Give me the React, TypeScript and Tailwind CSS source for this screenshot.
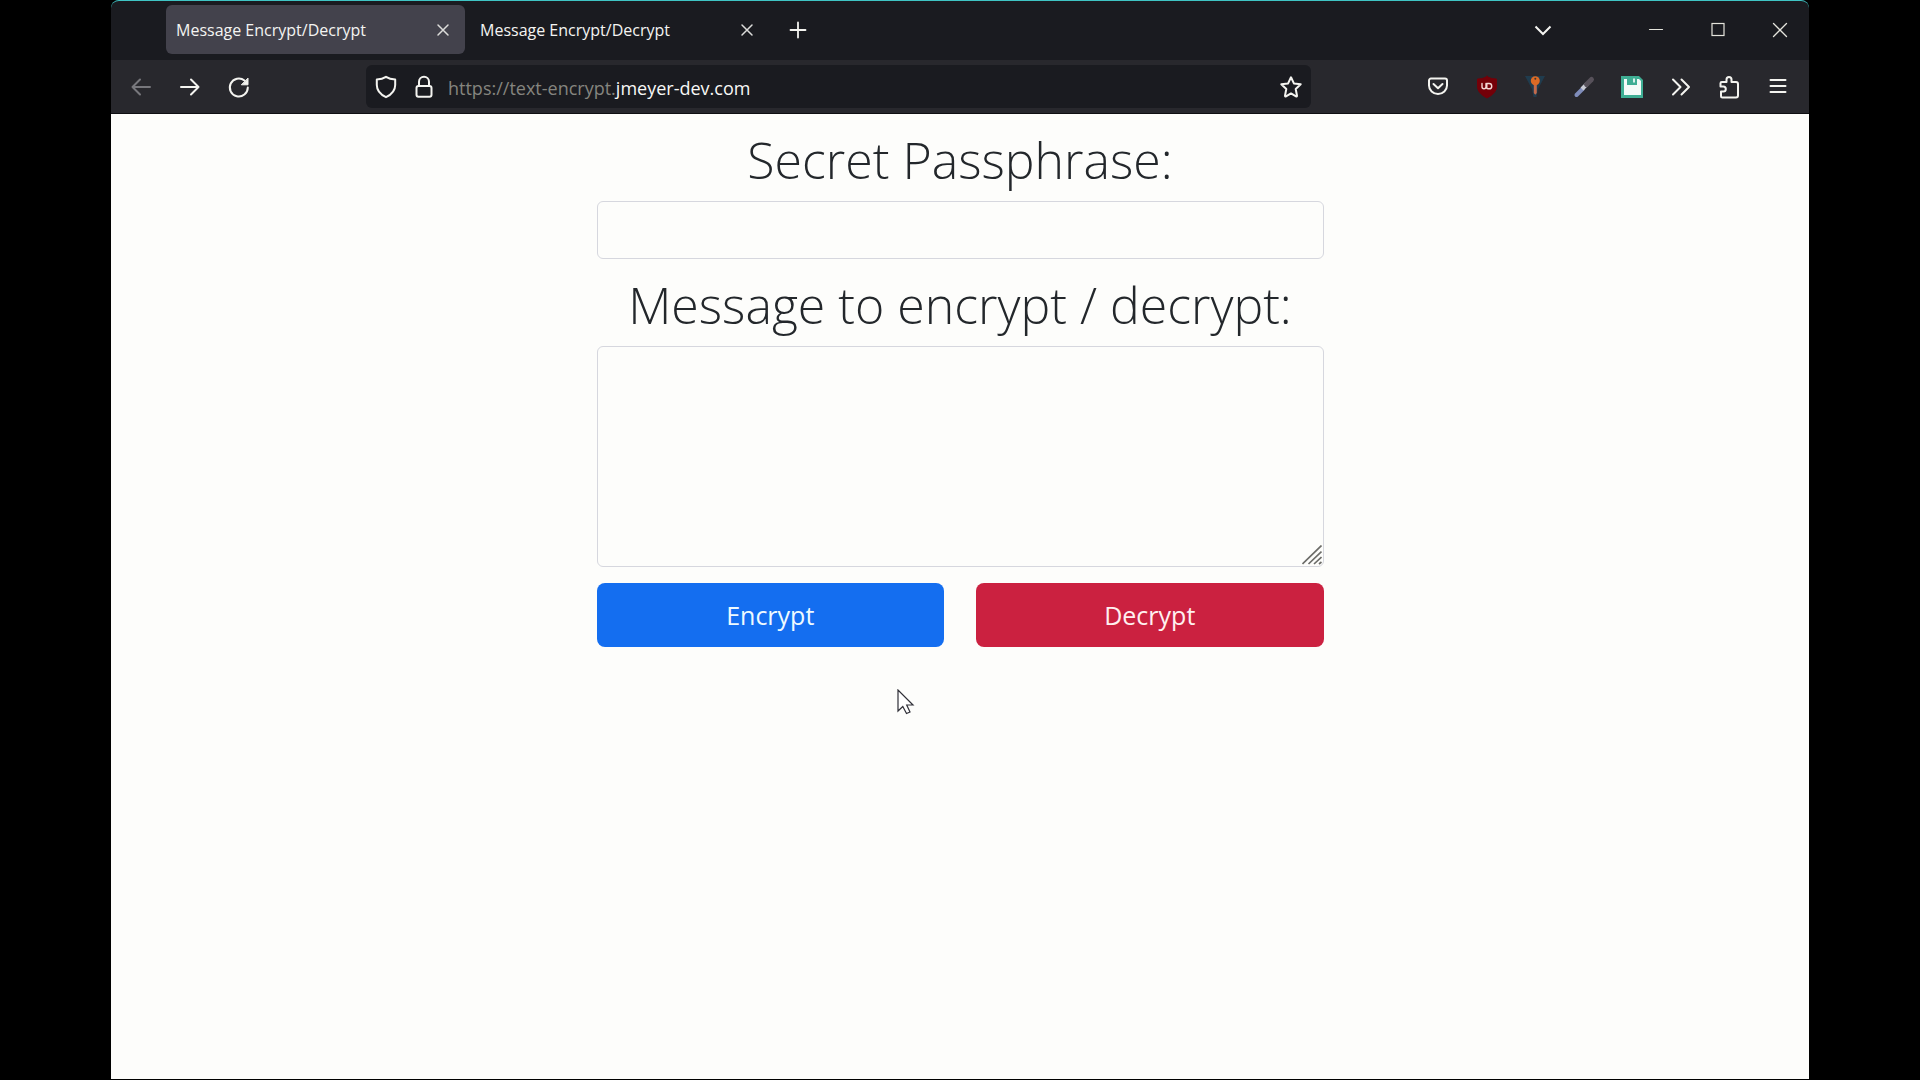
import React from "react";

type IconProps = { children: React.ReactNode; className?: string; size?: number };

function Icon({ children, className = "", size = 24 }: IconProps) {
  return (
    <svg
      width={size}
      height={size}
      viewBox={`0 0 ${size} ${size}`}
      fill="none"
      stroke="currentColor"
      strokeWidth={2}
      strokeLinecap="round"
      strokeLinejoin="round"
      className={`shrink-0 ${className}`}
      aria-hidden="true"
    >
      {children}
    </svg>
  );
}

function BarButton({ label, children }: { label: string; children: React.ReactNode }) {
  return (
    <button type="button" aria-label={label} className="flex size-6 shrink-0 items-center justify-center">
      {children}
    </button>
  );
}

function Tab({ active = false }: { active?: boolean }) {
  return (
    <div
      className={
        active
          ? "flex h-[49px] w-[299px] items-center justify-between rounded-md bg-[#43424c] pr-2.5 pl-2.5"
          : "flex h-[49px] w-[299px] items-center justify-between rounded-md pr-2.5 pl-2.5"
      }
    >
      <button type="button" className="text-base whitespace-nowrap text-[#f4f4f2]">
        Message Encrypt/Decrypt
      </button>
      <BarButton label="Close tab">
        <Icon className="text-[#dcdcda]">
          <path d="M7 7l10 10M17 7L7 17" strokeWidth={1.5} />
        </Icon>
      </BarButton>
    </div>
  );
}

function TitleBar() {
  return (
    <div className="flex h-[60px] items-center justify-between rounded-t-lg border-t border-[#3fc4c4] bg-[#1a1b20] pr-[17px] pb-0.5 pl-[55px]">
      <div className="flex items-center gap-[5px]">
        <Tab active />
        <Tab />
        <div className="pl-3">
          <BarButton label="New tab">
            <Icon>
              <path d="M12 4.5v15M4.5 12h15" strokeWidth={1.8} />
            </Icon>
          </BarButton>
        </div>
      </div>
      <div className="flex items-center">
        <div className="mr-[89px]">
          <BarButton label="List all tabs">
            <Icon>
              <path d="M4.5 8.5l7.5 7.5 7.5-7.5" strokeLinecap="butt" strokeLinejoin="miter" />
            </Icon>
          </BarButton>
        </div>
        <div className="flex gap-[38px] text-[#e4e4dc]">
          <BarButton label="Minimize">
            <Icon>
              <path d="M5.5 11.5h13" strokeWidth={1.2} />
            </Icon>
          </BarButton>
          <BarButton label="Maximize">
            <Icon>
              <rect x={6} y={5.5} width={12} height={12} strokeWidth={1.2} strokeLinejoin="miter" />
            </Icon>
          </BarButton>
          <BarButton label="Close">
            <Icon>
              <path d="M5.5 5.5l13 13M18.5 5.5l-13 13" strokeWidth={1.3} />
            </Icon>
          </BarButton>
        </div>
      </div>
    </div>
  );
}

function UrlBar() {
  return (
    <div className="mx-[115px] flex h-[43px] min-w-0 flex-1 items-center rounded-md bg-[#1a1b20] px-2">
      <div className="flex gap-3.5">
        <BarButton label="Tracking protection">
          <Icon>
            <path d="M12 1.8c2.6 1.7 5.5 2.5 9.200 2.700v5.500c0 5.300-3.200 9.300-9.200 12.200C6 19.300 2.800 15.300 2.800 10V4.500C6.500 4.300 9.400 3.500 12 1.800z" />
          </Icon>
        </BarButton>
        <BarButton label="Site information">
          <Icon>
            <path d="M7 11V6.800a5 5 0 0 1 10 0V11" />
            <rect x={4.5} y={11} width={15} height={10.8} rx={2} />
          </Icon>
        </BarButton>
      </div>
      <div className="ml-3 flex flex-1 items-center overflow-hidden pt-0.5 text-lg whitespace-nowrap">
        <span className="text-[#85857f]">https://text-encrypt.</span>
        <span className="text-[#f8f8f6]">jmeyer-dev.com</span>
      </div>
      <BarButton label="Bookmark this page">
        <Icon>
          <path d="M12 2.3l2.9 6.100 6.800.9-5 4.700 1.300 6.700c.1.700-.4 1-1 .700L12 18.400l-5 3c-.6.300-1.100 0-1-.7L7.300 14l-5-4.700 6.800-.9z" />
        </Icon>
      </BarButton>
    </div>
  );
}

function Extensions() {
  return (
    <div className="flex w-[364px] shrink-0 items-center justify-between">
      <BarButton label="Save to Pocket">
        <Icon>
          <path d="M5 3.5h14a2 2 0 0 1 2 2V10.500a9 8.500 0 0 1-18 0V5.500a2 2 0 0 1 2-2z" />
          <path d="M7.500 9l4.500 4.300L16.500 9" />
        </Icon>
      </BarButton>
      <BarButton label="uBlock Origin">
        <Icon>
          <path
            d="M12 1.500c2.500 1.700 6 2.500 9.500 2.500v7.500c0 5-4 8.500-9.500 11.500-5.500-3-9.500-6.500-9.500-11.500V4c3.500 0 7-.8 9.500-2.500z"
            fill="#740008"
            stroke="#740008"
            strokeWidth={1}
          />
          <path
            d="M7 8.500v3.300a2 2 0 0 0 4 0V8.500M11.800 8.500h2.300a2.600 2.600 0 0 1 0 5.300h-1.100a1.200 1.200 0 0 1-1.200-1.200z"
            stroke="#f3d6d4"
            strokeWidth={1.4}
          />
        </Icon>
      </BarButton>
      <BarButton label="Key manager">
        <Icon>
          <path d="M2 1h20l-7 13-1.500 8h-3L9 14z" fill="#203c4e" stroke="none" />
          <path d="M10.800 8h3v10l-1.500 1.800-1.500-1.800z" fill="#c26a4c" stroke="none" />
          <circle cx={12.3} cy={5.8} r={4.5} fill="#dc6a25" stroke="none" />
          <circle cx={12.3} cy={3.8} r={1} fill="#40342c" stroke="none" />
        </Icon>
      </BarButton>
      <BarButton label="Color picker">
        <Icon>
          <path d="M4.500 20l6.500-6.500" stroke="#7f8cba" strokeWidth={4} />
          <path d="M10 14l5-5" stroke="#c9cbd4" strokeWidth={4} strokeLinecap="butt" />
          <path d="M14.500 9.500L19.500 4.500" stroke="#57515a" strokeWidth={5} />
        </Icon>
      </BarButton>
      <BarButton label="Save page">
        <Icon>
          <path d="M1 1h18l4 4v18H1z" fill="#3fae94" stroke="none" />
          <path d="M4 4h3v6h10V4h2l2 2v14H4z" fill="#f4fbf8" stroke="none" />
          <path d="M8 2h8v7H8z" fill="#3fae94" stroke="none" />
          <path d="M13 3.500h2v4h-2z" fill="#d8f0ea" stroke="none" />
        </Icon>
      </BarButton>
      <BarButton label="More tools">
        <Icon>
          <path d="M4 4.500l7.500 7.500L4 19.500M12.500 4.500L20 12l-7.500 7.500" />
        </Icon>
      </BarButton>
      <BarButton label="Extensions">
        <Icon>
          <path d="M4.800 7h4.700V4.500a2.500 2.500 0 0 1 5 0V7H19a2 2 0 0 1 2 2v11.500a2 2 0 0 1-2 2H5.500a1.500 1.500 0 0 1-1.500-1.500v-4.500h2.300a2.500 2.500 0 0 0 0-5H3.500V8.300A1.300 1.300 0 0 1 4.800 7z" />
        </Icon>
      </BarButton>
      <BarButton label="Open menu">
        <Icon>
          <path d="M4.500 5h15M4.500 11h15M4.500 17h15" />
        </Icon>
      </BarButton>
    </div>
  );
}

function NavBar() {
  return (
    <div className="flex h-[54px] items-center border-b border-[#0f0f12] bg-[#28282d] pr-[19px] pl-[18px]">
      <div className="flex gap-[25px]">
        <div className="flex text-[#77777c]">
          <BarButton label="Back">
            <Icon>
              <path d="M21 12H3.500M11 4.500L3.500 12l7.500 7.500" />
            </Icon>
          </BarButton>
        </div>
        <BarButton label="Forward">
          <Icon>
            <path d="M3 12h17.500M13 4.500l7.500 7.500-7.500 7.500" />
          </Icon>
        </BarButton>
        <BarButton label="Reload">
          <Icon>
            <path d="M20.800 12.500A9 9 0 1 1 17.500 5.500" />
            <path d="M21 3.500v6.300h-6.300z" fill="currentColor" strokeWidth={1} />
          </Icon>
        </BarButton>
      </div>
      <UrlBar />
      <Extensions />
    </div>
  );
}

function EncryptForm() {
  return (
    <form className="mx-auto flex w-full max-w-[727px] flex-col pt-3" onSubmit={(e) => e.preventDefault()}>
      <label
        htmlFor="passphrase"
        className="h-[75px] text-center text-[50px] leading-[68px] font-light whitespace-nowrap text-[#23272b]"
      >
        Secret Passphrase:
      </label>
      <input
        id="passphrase"
        type="text"
        className="h-[58px] w-full rounded-md border border-[#d6d7de] bg-transparent px-4 text-2xl outline-none"
      />
      <label
        htmlFor="message"
        className="mt-3 h-[75px] text-center text-[50px] leading-[68px] font-light whitespace-nowrap text-[#23272b]"
      >
        Message to encrypt / decrypt:
      </label>
      <div className="relative flex">
        <textarea
          id="message"
          className="h-[221px] w-full resize-none rounded-md border border-[#d6d7de] bg-transparent px-4 py-2 text-2xl outline-none"
        />
        <svg
          width={20}
          height={20}
          viewBox="0 0 20 20"
          className="pointer-events-none absolute right-0.5 bottom-0.5"
          aria-hidden="true"
        >
          <path
            d="M0.500 19L19.500 0.500M6.500 19L19.500 6.500M12 19L19.500 12M17 19L19.500 17"
            stroke="#6c6c68"
            strokeWidth={1.7}
            fill="none"
          />
        </svg>
      </div>
      <div className="mt-4 grid grid-cols-2 gap-8">
        <button type="submit" className="h-16 rounded-lg bg-[#146ef0] pt-0.5 text-[25px] text-[#eefaff]">
          Encrypt
        </button>
        <button type="button" className="h-16 rounded-lg bg-[#cb2140] pt-0.5 text-[25px] text-[#fff0f0]">
          Decrypt
        </button>
      </div>
    </form>
  );
}

function Pointer() {
  return (
    <svg
      width={18}
      height={26}
      viewBox="0 0 18 26"
      className="pointer-events-none absolute top-[689px] left-[786px]"
      aria-hidden="true"
    >
      <path d="M1 1v21l4.800-4.500 3.700 7 3.500-1.500-3.300-7H16z" fill="#fff" stroke="#303038" strokeWidth={1.2} />
    </svg>
  );
}

export default function App() {
  return (
    <div className="flex min-h-screen flex-col bg-black px-[111px] pb-px font-['Open_Sans','Noto_Sans',sans-serif] text-[#f4f4f0]">
      <div className="relative flex flex-1 flex-col">
        <header>
          <TitleBar />
          <NavBar />
        </header>
        <main className="flex-1 bg-[#fdfdfb]">
          <EncryptForm />
        </main>
        <Pointer />
      </div>
    </div>
  );
}
